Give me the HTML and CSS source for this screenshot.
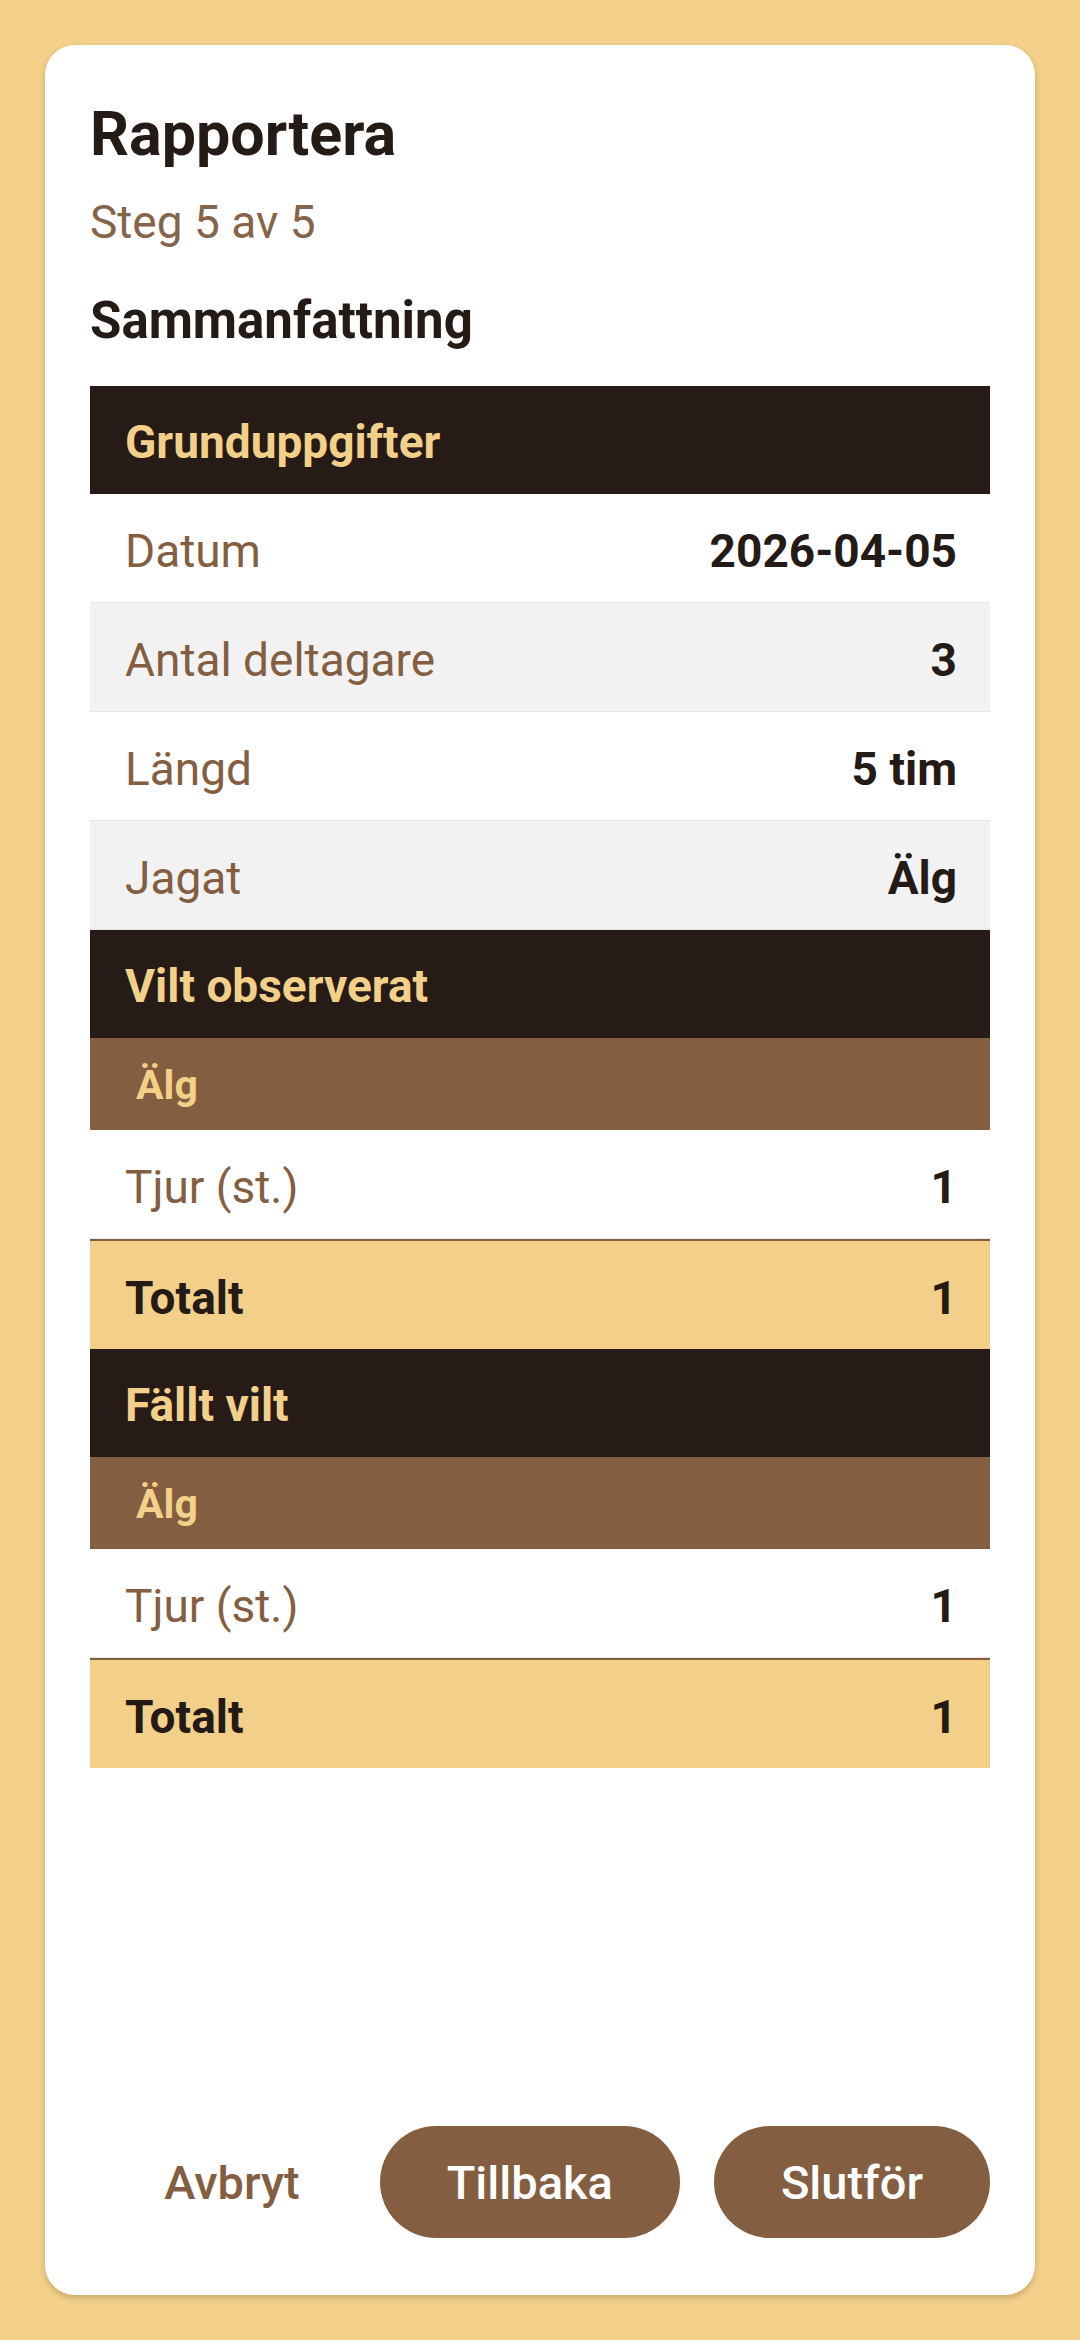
FILE: index.html
```html
<!DOCTYPE html>
<html lang="sv">
<head>
    <meta charset="UTF-8">
    <meta name="viewport" content="width=device-width, initial-scale=1.0">
    <title>Rapportera</title>
    <link rel="stylesheet" href="styles.css">
</head>
<body>
    <div class="card">
        <h1 class="title">Rapportera</h1>
        <div class="step">Steg 5 av 5</div>
        <h2 class="section-title">Sammanfattning</h2>

        <div class="summary">
            <div class="group-head">Grunduppgifter</div>
            <div class="row"><span class="label">Datum</span><span class="value">2026-04-05</span></div>
            <div class="row alt"><span class="label">Antal deltagare</span><span class="value">3</span></div>
            <div class="row"><span class="label">Längd</span><span class="value">5 tim</span></div>
            <div class="row alt"><span class="label">Jagat</span><span class="value">Älg</span></div>

            <div class="group-head">Vilt observerat</div>
            <div class="species">Älg</div>
            <div class="row"><span class="label">Tjur (st.)</span><span class="value">1</span></div>
            <div class="total"><span>Totalt</span><span>1</span></div>

            <div class="group-head">Fällt vilt</div>
            <div class="species">Älg</div>
            <div class="row"><span class="label">Tjur (st.)</span><span class="value">1</span></div>
            <div class="total"><span>Totalt</span><span>1</span></div>
        </div>

        <div class="actions">
            <button class="btn-text">Avbryt</button>
            <button class="btn">Tillbaka</button>
            <button class="btn">Slutför</button>
        </div>
    </div>
</body>
</html>
```

FILE: styles.css
```css
* {
    box-sizing: border-box;
}

body {
    margin: 0;
    padding: 45px;
    height: 100vh;
    background-color: #f3d18b;
    font-family: Roboto, "Noto Sans", sans-serif;
    color: #241a16;
}

.card {
    display: flex;
    flex-direction: column;
    height: 100%;
    padding: 0 45px 57px;
    background-color: #fff;
    border-radius: 30px;
    box-shadow: 0 3px 6px rgba(80, 50, 20, 0.25);
}

.title {
    margin: 53px 0 0;
    font-size: 61px;
    line-height: 72px;
    font-weight: 700;
}

.step {
    margin-top: 25px;
    font-size: 46px;
    line-height: 54px;
    color: #86644a;
}

.section-title {
    margin: 42px 0 0;
    font-size: 51px;
    line-height: 60px;
    font-weight: 700;
}

.summary {
    margin-top: 35px;
}

.group-head {
    height: 108px;
    display: flex;
    align-items: center;
    padding: 4px 33px 0 35px;
    background-color: #261b17;
    color: #f3d08a;
    font-size: 46px;
    font-weight: 700;
}

.species {
    height: 92px;
    display: flex;
    align-items: center;
    padding: 2px 46px 0;
    background-color: #845e40;
    color: #f3d08a;
    font-size: 41px;
    font-weight: 700;
}

.row {
    height: 109px;
    display: flex;
    align-items: center;
    justify-content: space-between;
    padding: 5px 33px 0 35px;
    border-bottom: 1px solid #e6e6e6;
    font-size: 46px;
}

.row.alt {
    background-color: #f2f2f2;
}

.label {
    color: #845e40;
}

.value {
    font-weight: 700;
}

.total {
    height: 110px;
    display: flex;
    align-items: center;
    justify-content: space-between;
    padding: 5px 33px 0 35px;
    border-top: 2px solid #845e40;
    background-color: #f3d08a;
    font-size: 46px;
    font-weight: 700;
}

.actions {
    margin-top: auto;
    display: flex;
    justify-content: flex-end;
    gap: 34px;
}

.btn,
.btn-text {
    height: 112px;
    padding: 0 67px;
    border: none;
    border-radius: 56px;
    font-family: Roboto, "Noto Sans", sans-serif;
    font-size: 47px;
    font-weight: 500;
    cursor: pointer;
}

.btn {
    background-color: #845e40;
    color: #fff;
}

.btn-text {
    padding: 0 46px;
    background: none;
    color: #845e40;
}
```
